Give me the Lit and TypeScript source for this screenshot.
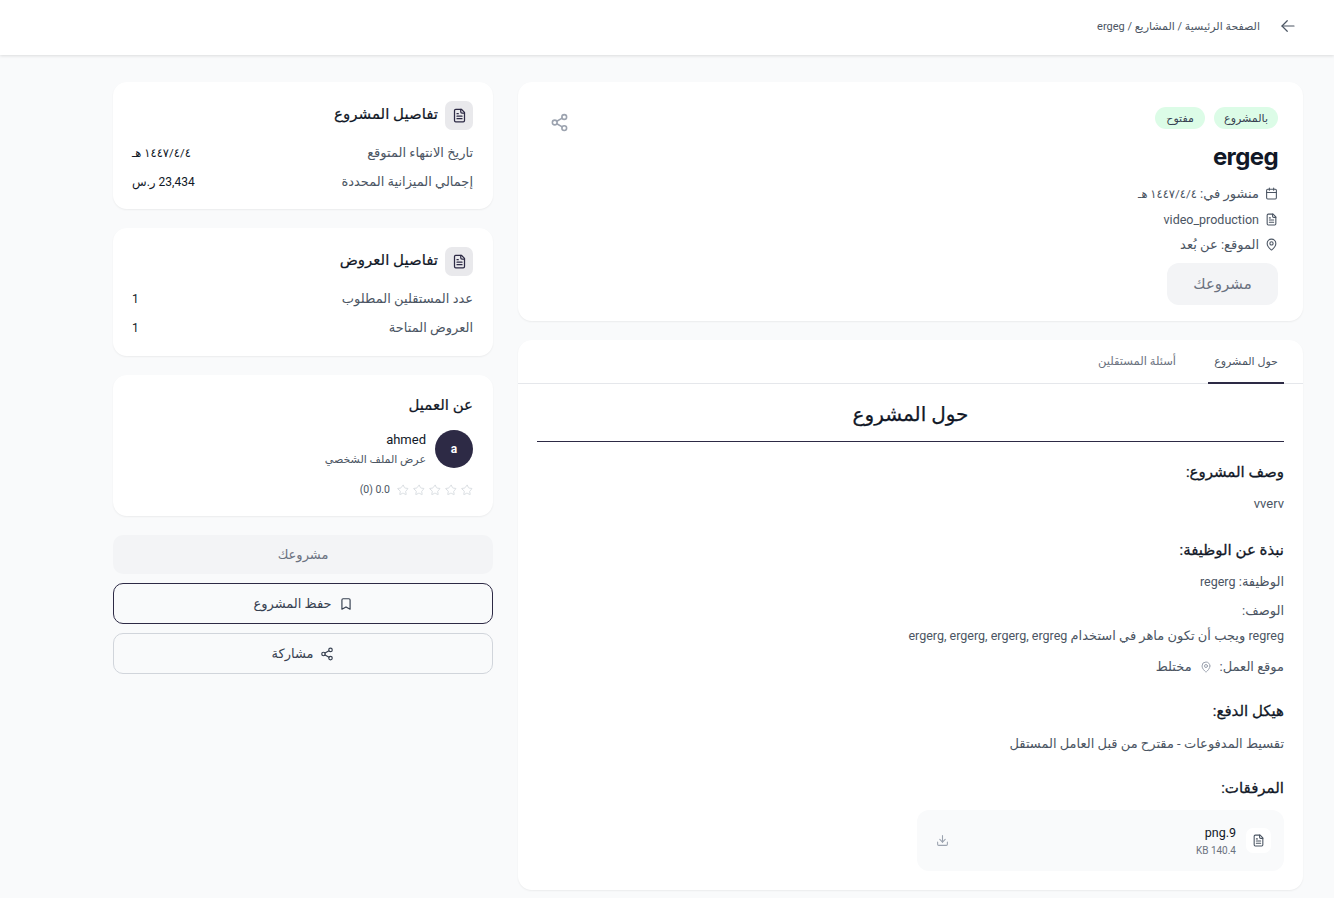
import { LitElement, css, html, svg } from 'lit';
import { customElement } from 'lit/decorators.js';

const icon = (body: unknown, size = 16, width = 2) => html`
  <svg width=${size} height=${size} viewBox="0 0 24 24" fill="none" stroke="currentColor"
    stroke-width=${width} stroke-linecap="round" stroke-linejoin="round">${body}</svg>
`;

const fileText = svg`
  <path d="M15 2H6a2 2 0 0 0-2 2v16a2 2 0 0 0 2 2h12a2 2 0 0 0 2-2V7Z"/>
  <path d="M14 2v4a2 2 0 0 0 2 2h4"/>
  <path d="M10 9H8"/><path d="M16 13H8"/><path d="M16 17H8"/>
`;
const share = svg`
  <circle cx="18" cy="5" r="3"/><circle cx="6" cy="12" r="3"/><circle cx="18" cy="19" r="3"/>
  <line x1="8.59" x2="15.42" y1="13.51" y2="17.49"/><line x1="15.41" x2="8.59" y1="6.51" y2="10.49"/>
`;
const calendar = svg`
  <path d="M8 2v4"/><path d="M16 2v4"/><rect width="18" height="18" x="3" y="4" rx="2"/><path d="M3 10h18"/>
`;
const pin = svg`
  <path d="M20 10c0 5-5.5 10.2-7.4 11.8a1 1 0 0 1-1.2 0C9.5 20.2 4 15 4 10a8 8 0 0 1 16 0"/>
  <circle cx="12" cy="10" r="3"/>
`;
const star = svg`
  <path d="M11.5 2.3a.5.5 0 0 1 1 0l2.3 4.7a2 2 0 0 0 1.5 1.1l5.2.8a.5.5 0 0 1 .3.9l-3.8 3.7a2 2 0 0 0-.6 1.8l.9 5.2a.5.5 0 0 1-.8.6l-4.6-2.5a2 2 0 0 0-1.9 0l-4.6 2.5a.5.5 0 0 1-.8-.6l.9-5.2a2 2 0 0 0-.6-1.8L1.6 9.8a.5.5 0 0 1 .3-.9l5.2-.8a2 2 0 0 0 1.5-1.1Z"/>
`;
const bookmark = svg`<path d="m19 21-7-4-7 4V5a2 2 0 0 1 2-2h10a2 2 0 0 1 2 2v16z"/>`;
const download = svg`
  <path d="M21 15v4a2 2 0 0 1-2 2H5a2 2 0 0 1-2-2v-4"/><polyline points="7 10 12 15 17 10"/><line x1="12" x2="12" y1="15" y2="3"/>
`;
const arrowLeft = svg`<path d="M20 12H4"/><path d="m11 5-7 7 7 7"/>`;

@customElement('app-root')
export class AppRoot extends LitElement {
  static styles = css`
    :host {
      display: block;
      min-height: 898px;
      background: #f9fafb;
      font-family: Roboto, "DejaVu Sans", sans-serif;
      color: #111827;
    }
    * { box-sizing: border-box; }

    .topbar {
      height: 55px;
      background: #fff;
      box-shadow: 0 1px 3px rgba(0, 0, 0, 0.12);
      display: flex;
      align-items: center;
      gap: 19px;
      padding: 0 37px 3px 0;
      margin-bottom: 27px;
    }
    .back { color: #4b5563; display: flex; }
    .crumbs { font-size: 11px; color: #4b5563; }

    .page {
      display: flex;
      gap: 25px;
      padding: 0 31px 0 113px;
      align-items: flex-start;
    }
    .main { width: 785px; flex: none; display: flex; flex-direction: column; gap: 19px; }
    .side { width: 380px; flex: none; display: flex; flex-direction: column; gap: 19px; }

    .card {
      background: #fff;
      border-radius: 14px;
      box-shadow: 0 1px 2px rgba(0, 0, 0, 0.06);
    }

    .hero {
      height: 239px;
      padding: 25px 25px 0 25px;
      display: flex;
      justify-content: space-between;
    }
    .badges { display: flex; gap: 9px; }
    .badge {
      height: 22px;
      padding: 0 10px;
      border-radius: 11px;
      background: #dcfce7;
      color: #374151;
      font-size: 11px;
      display: flex;
      align-items: center;
      justify-content: center;
    }
    .badge.open { min-width: 50px; }
    h1 {
      font-family: Inter, sans-serif;
      font-size: 24px;
      font-weight: 700;
      letter-spacing: -0.6px;
      margin: 12px 0 8px;
      line-height: 32px;
      color: #111827;
    }
    .meta-row {
      height: 25.5px;
      display: flex;
      align-items: center;
      gap: 6px;
      font-size: 13px;
      color: #4b5563;
    }
    .date { font-size: 11.5px; }
    .lat { font-size: 12.5px; }
    .muted-btn {
      background: #f3f4f6;
      color: #6b7280;
      border-radius: 12px;
      display: flex;
      align-items: center;
      justify-content: center;
    }
    .hero .muted-btn { width: 111px; height: 42px; font-size: 15px; margin-top: 5px; }
    .hero-share { color: #9ca3af; display: flex; margin: 6px 0 0 0; padding-left: 7px; }

    .details { height: 550px; overflow: hidden; }
    .tabs {
      height: 44px;
      display: flex;
      border-bottom: 1px solid #e5e7eb;
      padding: 0 19px;
    }
    .tab {
      height: 44px;
      font-size: 11.5px;
      color: #6b7280;
      display: flex;
      align-items: center;
      padding-bottom: 2px;
      justify-content: center;
      white-space: nowrap;
    }
    .tab.active { width: 76px; font-size: 11px; color: #4b5563; border-bottom: 2px solid #2d2a45; padding-bottom: 0; }
    .tab.active + .tab { margin-right: 32px; }

    .body { padding: 0 19px; }
    h2 {
      margin: 0 0 20px;
      height: 58px;
      line-height: 60px;
      text-align: center;
      font-size: 20px;
      font-weight: 400;
      -webkit-text-stroke: 0.25px #111827;
      color: #111827;
      border-bottom: 1px solid #2d2a45;
    }
    h3 {
      margin: 0;
      font-size: 15px;
      font-weight: 400;
      -webkit-text-stroke: 0.3px #111827;
      color: #111827;
      line-height: 20px;
    }
    .para { font-size: 13px; color: #4b5563; line-height: 20px; padding-top: 1px; margin-bottom: -1px; }
    .work { margin-top: 11px; display: flex; align-items: center; gap: 8px; }
    .work svg { color: #9ca3af; }
    .attachment {
      margin-top: 12px;
      width: 367px;
      height: 61px;
      background: #f9fafb;
      border-radius: 12px;
      display: flex;
      align-items: center;
      justify-content: space-between;
      padding: 0 13px 0 19px;
    }
    .file { display: flex; align-items: center; gap: 10px; }
    .file-icon {
      width: 25px;
      height: 25px;
      background: #fff;
      border-radius: 7px;
      display: flex;
      align-items: center;
      justify-content: center;
      color: #4b5563;
    }
    .file-text { padding-top: 2px; }
    .file-name { font-size: 12.5px; color: #111827; line-height: 16px; padding-bottom: 2px; }
    .file-size { font-size: 10px; color: #6b7280; line-height: 16px; }
    .dl { color: #9ca3af; display: flex; }

    .info { padding: 18px 20px 0 19px; }
    .info-head { display: flex; align-items: center; gap: 7px; height: 30px; margin-bottom: 8px; }
    .info-icon {
      width: 28px;
      height: 29px;
      border-radius: 7px;
      background: #e9e9ec;
      color: #2d2a45;
      display: flex;
      align-items: center;
      justify-content: center;
    }
    .info-title {
      font-size: 15px;
      padding-bottom: 2px;
      -webkit-text-stroke: 0.2px #111827;
      color: #111827;
    }
    .kv {
      height: 29px;
      display: flex;
      align-items: center;
      justify-content: space-between;
      font-size: 13px;
      color: #4b5563;
    }
    .kv b { font-weight: 400; color: #111827; font-size: 12px; }
    .kv b.date { font-size: 11.5px; }

    .client { height: 141px; padding: 20px 20px 0 19px; }
    .client-title { font-size: 15px; line-height: 20px; -webkit-text-stroke: 0.2px #111827; }
    .person { display: flex; align-items: center; gap: 9px; margin-top: 15px; }
    .avatar {
      width: 38px;
      height: 38px;
      border-radius: 50%;
      background: #2d2a45;
      color: #fff;
      font-size: 12px;
      font-weight: 700;
      display: flex;
      align-items: center;
      justify-content: center;
    }
    .person-name { font-size: 13px; line-height: 20px; color: #111827; }
    .person-link { font-size: 11px; line-height: 18px; padding-top: 1px; margin-bottom: -1px; color: #4b5563; }
    .rating { display: flex; align-items: center; gap: 4px; margin-top: 15px; color: #d1d5db; }
    .score { font-size: 10.5px; color: #4b5563; margin-right: 3px; }

    .actions { display: flex; flex-direction: column; gap: 9px; }
    .actions .muted-btn { height: 39px; font-size: 13px; border-radius: 10px; }
    .outline {
      height: 41px;
      border-radius: 10px;
      border: 1px solid #d1d5db;
      background: #f9fafb;
      color: #374151;
      font-size: 13px;
      display: flex;
      align-items: center;
      justify-content: center;
      gap: 7px;
    }
    .outline.dark { border-color: #2d2a45; }
  `;

  render() {
    return html`
      <div dir="rtl">
        <header class="topbar">
          <span class="back">${icon(arrowLeft, 18, 1.6)}</span>
          <span class="crumbs">الصفحة الرئيسية / المشاريع / ergeg</span>
        </header>
        <div class="page">
          <div class="main">
            <section class="card hero">
              <div>
                <div class="badges">
                  <span class="badge">بالمشروع</span>
                  <span class="badge open">مفتوح</span>
                </div>
                <h1>ergeg</h1>
                <div class="meta">
                  <div class="meta-row">${icon(calendar, 13)}<span>منشور في: <span class="date">١٤٤٧/٤/٤ هـ</span></span></div>
                  <div class="meta-row">${icon(fileText, 13)}<span class="lat">video_production</span></div>
                  <div class="meta-row">${icon(pin, 13)}<span>الموقع: عن بُعد</span></div>
                </div>
                <div class="muted-btn">مشروعك</div>
              </div>
              <span class="hero-share">${icon(share, 19)}</span>
            </section>

            <section class="card details">
              <div class="tabs">
                <div class="tab active">حول المشروع</div>
                <div class="tab">أسئلة المستقلين</div>
              </div>
              <div class="body">
                <h2>حول المشروع</h2>
                <h3>وصف المشروع:</h3>
                <div class="para" style="margin-top:11px">vverv</div>
                <h3 style="margin-top:27px">نبذة عن الوظيفة:</h3>
                <div class="para" style="margin-top:11px">الوظيفة: <span class="lat">regerg</span></div>
                <div class="para" style="margin-top:9px">الوصف:</div>
                <div class="para" style="margin-top:5px"><span class="lat">regreg</span> ويجب أن تكون ماهر في استخدام <span class="lat">ergerg, ergerg, ergerg, ergreg</span></div>
                <div class="para work">
                  <span>موقع العمل:</span>${icon(pin, 12)}<span>مختلط</span>
                </div>
                <h3 style="margin-top:25px">هيكل الدفع:</h3>
                <div class="para" style="margin-top:12px">تقسيط المدفوعات - مقترح من قبل العامل المستقل</div>
                <h3 style="margin-top:25px">المرفقات:</h3>
                <div class="attachment">
                  <div class="file">
                    <span class="file-icon">${icon(fileText, 13)}</span>
                    <div class="file-text">
                      <div class="file-name">9.png</div>
                      <div class="file-size">140.4 KB</div>
                    </div>
                  </div>
                  <span class="dl">${icon(download, 13)}</span>
                </div>
              </div>
            </section>
          </div>

          <aside class="side">
            <section class="card info" style="height:127px">
              <div class="info-head">
                <span class="info-icon">${icon(fileText, 15)}</span>
                <span class="info-title">تفاصيل المشروع</span>
              </div>
              <div class="kv"><span>تاريخ الانتهاء المتوقع</span><b class="date">١٤٤٧/٤/٤ هـ</b></div>
              <div class="kv"><span>إجمالي الميزانية المحددة</span><b>23,434 ر.س</b></div>
            </section>
            <section class="card info" style="height:128px">
              <div class="info-head">
                <span class="info-icon">${icon(fileText, 15)}</span>
                <span class="info-title">تفاصيل العروض</span>
              </div>
              <div class="kv"><span>عدد المستقلين المطلوب</span><b>1</b></div>
              <div class="kv"><span>العروض المتاحة</span><b>1</b></div>
            </section>
            <section class="card client">
              <div class="client-title">عن العميل</div>
              <div class="person">
                <span class="avatar">a</span>
                <div>
                  <div class="person-name">ahmed</div>
                  <div class="person-link">عرض الملف الشخصي</div>
                </div>
              </div>
              <div class="rating">
                ${[0, 1, 2, 3, 4].map(() => icon(star, 12, 1.6))}
                <span class="score">0.0 (0)</span>
              </div>
            </section>
            <div class="actions">
              <div class="muted-btn">مشروعك</div>
              <div class="outline dark">${icon(bookmark, 14)}<span>حفظ المشروع</span></div>
              <div class="outline">${icon(share, 14)}<span>مشاركة</span></div>
            </div>
          </aside>
        </div>
      </div>
    `;
  }
}
